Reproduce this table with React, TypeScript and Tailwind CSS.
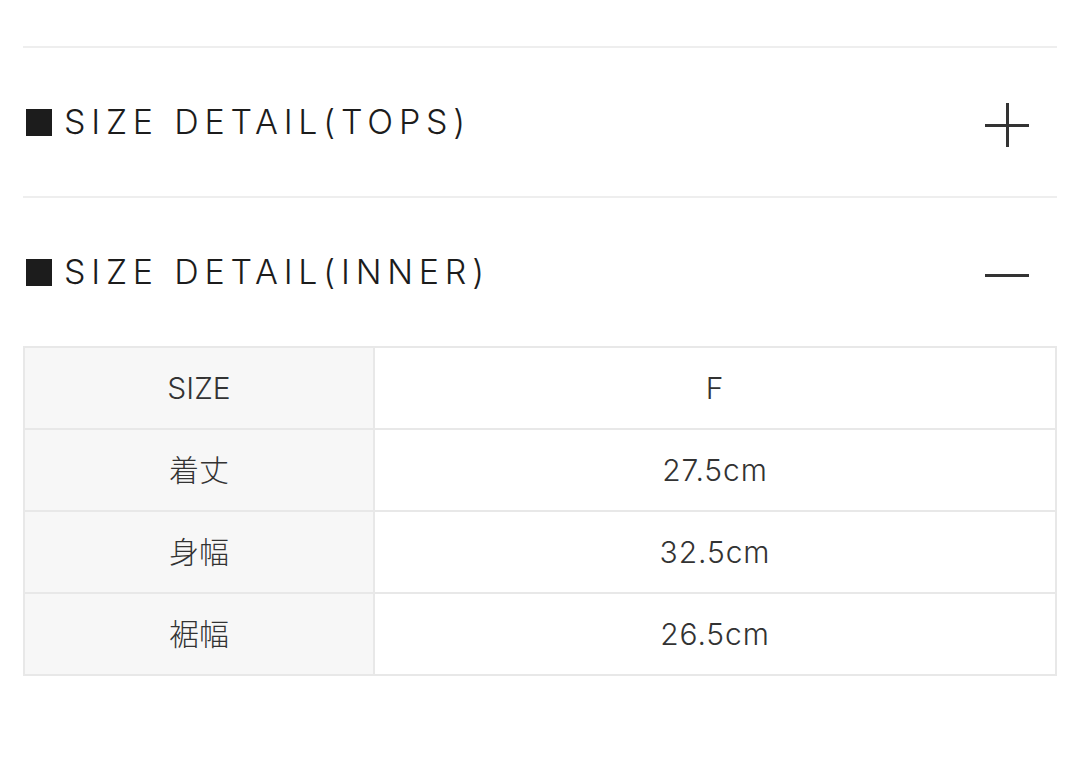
import { useState } from "react";

type Row = { label: string; value: string };

const rows: Row[] = [
  { label: "SIZE", value: "F" },
  { label: "着丈", value: "27.5cm" },
  { label: "身幅", value: "32.5cm" },
  { label: "裾幅", value: "26.5cm" },
];

const font = { fontFamily: "Inter, 'Noto Sans CJK JP', sans-serif" };

const Toggle = ({ open }: { open: boolean }) => (
  <span className="relative block h-[44px] w-[44px]">
    <span className="absolute left-0 top-[21px] h-[3px] w-[44px] bg-[#333]" />
    {!open && <span className="absolute left-[21px] top-0 h-[44px] w-[3px] bg-[#333]" />}
  </span>
);

const Section = ({
  title,
  open,
  onToggle,
}: {
  title: string;
  open: boolean;
  onToggle: () => void;
}) => (
  <div className="border-t-2 border-[#eeeeee]">
    <button
      onClick={onToggle}
      className="flex h-[148px] w-full items-center justify-between pl-[3px] pr-[28px]"
    >
      <span className="flex items-center gap-[12px]">
        <span className="block h-[27px] w-[26px] bg-[#1c1c1c]" />
        <span
          className="text-[34px] font-light tracking-[0.17em] text-[#1c1c1c] leading-none"
          style={{ fontFamily: "Inter, 'Liberation Sans', sans-serif" }}
        >
          {title}
        </span>
      </span>
      <span className="mt-[6px]">
        <Toggle open={open} />
      </span>
    </button>
    {open && (
      <table className="w-full border-collapse" style={font}>
        <tbody>
          {rows.map((r) => (
            <tr key={r.label} className="h-[82px]">
              <td className="w-[350px] border-2 border-[#e8e8e8] bg-[#f7f7f7] text-center text-[30px] font-light text-[#333]">
                {r.label}
              </td>
              <td className="border-2 border-[#e8e8e8] bg-white text-center text-[30px] font-light tracking-[0.03em] text-[#333]">
                {r.value}
              </td>
            </tr>
          ))}
        </tbody>
      </table>
    )}
  </div>
);

export default function App() {
  const [openTops, setOpenTops] = useState(false);
  const [openInner, setOpenInner] = useState(true);
  return (
    <div className="min-h-[767px] bg-white px-[23px] pt-[46px]">
      <Section title="SIZE DETAIL(TOPS)" open={openTops} onToggle={() => setOpenTops(!openTops)} />
      <Section title="SIZE DETAIL(INNER)" open={openInner} onToggle={() => setOpenInner(!openInner)} />
    </div>
  );
}
